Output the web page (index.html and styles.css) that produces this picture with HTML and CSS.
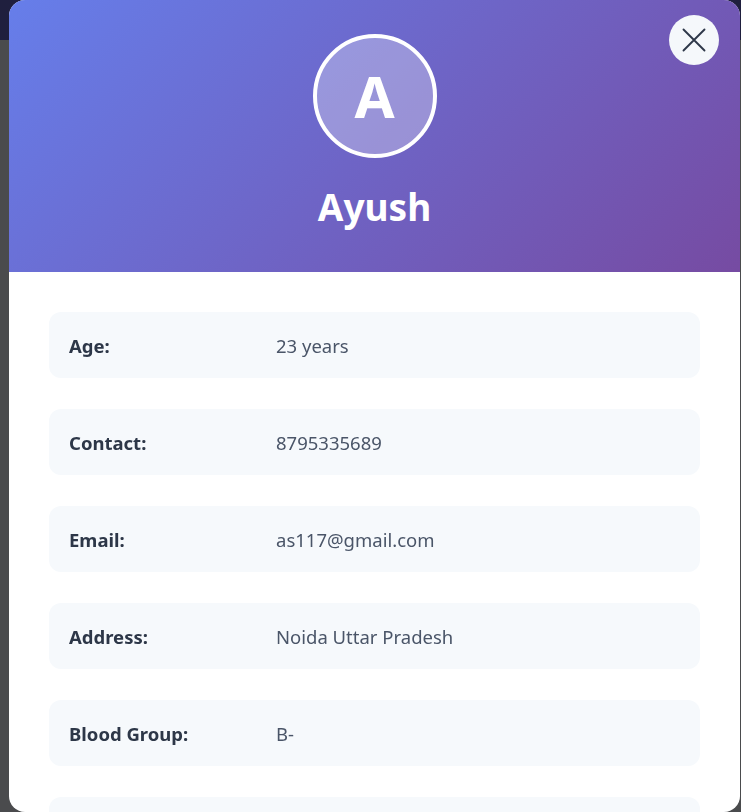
FILE: index.html
```
<!DOCTYPE html>
<html>
<head>
<meta charset="utf-8">
<link rel="stylesheet" href="styles.css">
</head>
<body>
<div class="page">
  <div class="navbar"></div>
</div>
<div class="overlay">
  <div class="modal">
    <div class="modal-header">
      <button class="close-btn" aria-label="Close">
        <svg width="28" height="28" viewBox="0 0 24 24" fill="none" stroke="#2d3748" stroke-width="1.6" stroke-linecap="round"><path d="M3 3 L21 21 M21 3 L3 21"/></svg>
      </button>
      <div class="avatar">A</div>
      <h2 class="name">Ayush</h2>
    </div>
    <div class="modal-body">
      <div class="row"><span class="label">Age:</span><span class="value">23 years</span></div>
      <div class="row"><span class="label">Contact:</span><span class="value">8795335689</span></div>
      <div class="row"><span class="label">Email:</span><span class="value">as117@gmail.com</span></div>
      <div class="row"><span class="label">Address:</span><span class="value">Noida Uttar Pradesh</span></div>
      <div class="row"><span class="label">Blood Group:</span><span class="value">B-</span></div>
      <div class="row"></div>
    </div>
  </div>
</div>
</body>
</html>
```
FILE: styles.css
```
* { box-sizing: border-box; }
html, body { margin: 0; padding: 0; height: 100%; overflow: hidden; }
body { font-family: "Noto Sans", "Open Sans", sans-serif; background: #4a4b4d; }
.page { height: 100%; background: #4a4b4d; }
.navbar { height: 40px; background: #1f1f3e; }
.overlay { position: fixed; inset: 0; padding-left: 9px; padding-right: 1px; }
.modal {
  width: 731px;
  height: 812px;
  background: #ffffff;
  border-radius: 16px;
  overflow: hidden;
}
.modal-header {
  position: relative;
  height: 272px;
  background: linear-gradient(135deg, #667eea 0%, #764ba2 100%);
  display: flex;
  flex-direction: column;
  align-items: center;
  padding-top: 34px;
}
.close-btn {
  position: absolute;
  top: 15px;
  right: 21px;
  width: 50px;
  height: 50px;
  border-radius: 50%;
  border: none;
  background: #f5f8fb;
  display: flex;
  align-items: center;
  justify-content: center;
  padding: 0;
}
.avatar {
  width: 124px;
  height: 124px;
  border-radius: 50%;
  border: 4px solid #ffffff;
  background: rgba(255, 255, 255, 0.3);
  color: #ffffff;
  font-weight: 700;
  font-size: 58px;
  display: flex;
  align-items: center;
  justify-content: center;
  line-height: 1;
}
.name {
  margin: 26px 0 0;
  color: #ffffff;
  font-size: 37px;
  font-weight: 700;
  line-height: 46px;
}
.modal-body {
  padding: 40px;
  display: flex;
  flex-direction: column;
  gap: 31px;
}
.row {
  flex: none;
  height: 66px;
  background: #f6f9fc;
  border-radius: 12px;
  display: flex;
  align-items: center;
  padding: 0 20px;
  font-size: 18.5px;
}
.label {
  width: 207px;
  font-weight: 700;
  color: #2d3748;
}
.value {
  color: #4a5568;
}
```
